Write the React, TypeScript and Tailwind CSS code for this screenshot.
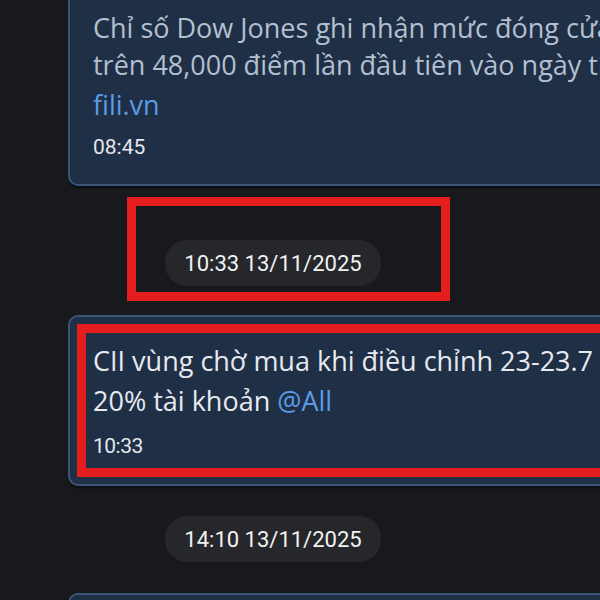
const bubbleText = "font-['Open_Sans',sans-serif]";
const timeText = "font-['Roboto',sans-serif]";

function DatePill({ label }: { label: string }) {
  return (
    <div
      className={`flex h-[46px] w-[216px] items-center justify-center rounded-[22px] bg-[#26272b] text-[22px] text-[#f1f2f4] ${timeText}`}
    >
      {label}
    </div>
  );
}

export default function App() {
  return (
    <div className="h-[600px] w-[600px] overflow-hidden bg-[#18191d]">
      <div className="flex flex-col pl-[68px]">
        {/* earlier message, top scrolled off */}
        <div className="mt-[-40px] w-[580px] rounded-[10px] border-2 border-[#3b5576] bg-[#1f2f46] pl-[23px] pt-[47px] pb-[22px] shadow-[0_2px_2px_rgba(0,0,0,0.5)]">
          <p className={`whitespace-nowrap text-[27px] leading-[37px] text-[#b3c0cf] ${bubbleText}`}>
            Chỉ số Dow Jones ghi nhận mức đóng cửa cao nhất
            <br />
            trên 48,000 điểm lần đầu tiên vào ngày thứ Tư
          </p>
          <p className={`mt-[3px] text-[27px] leading-[37px] text-[#5a9be6] ${bubbleText}`}>fili.vn</p>
          <p className={`mt-[9px] text-[21px] leading-[30px] text-[#e3e7ec] ${timeText}`}>08:45</p>
        </div>

        {/* highlighted date separator */}
        <div className="ml-[59px] mt-[11px] h-[104px] w-[323px] border-[9px] border-[#e41d1d] pl-[29px] pt-[34px]">
          <DatePill label="10:33 13/11/2025" />
        </div>

        {/* highlighted message */}
        <div className="mt-[14px] w-[580px] rounded-[10px] border-2 border-[#3b5576] bg-[#1f2f46] py-[7px] pl-[7px] shadow-[0_2px_2px_rgba(0,0,0,0.5)]">
          <div className="h-[153px] border-[9px] border-r-0 border-[#e41d1d] pl-[7px] pt-[8px]">
            <p className={`whitespace-nowrap text-[27px] leading-[40px] text-[#e6eaef] ${bubbleText}`}>
              CII vùng chờ mua khi điều chỉnh 23-23.7
              <br />
              20% tài khoản <span className="text-[#5a9be6]">@All</span>
            </p>
            <p className={`mt-[12px] text-[21px] leading-[26px] tracking-[-0.5px] text-[#e3e7ec] ${timeText}`}>10:33</p>
          </div>
        </div>

        <div className="ml-[97px] mt-[30px]">
          <DatePill label="14:10 13/11/2025" />
        </div>

        <div className="mt-[31px] h-[60px] w-[580px] rounded-[10px] border-2 border-[#3b5576] bg-[#1f2f46]" />
      </div>
    </div>
  );
}
